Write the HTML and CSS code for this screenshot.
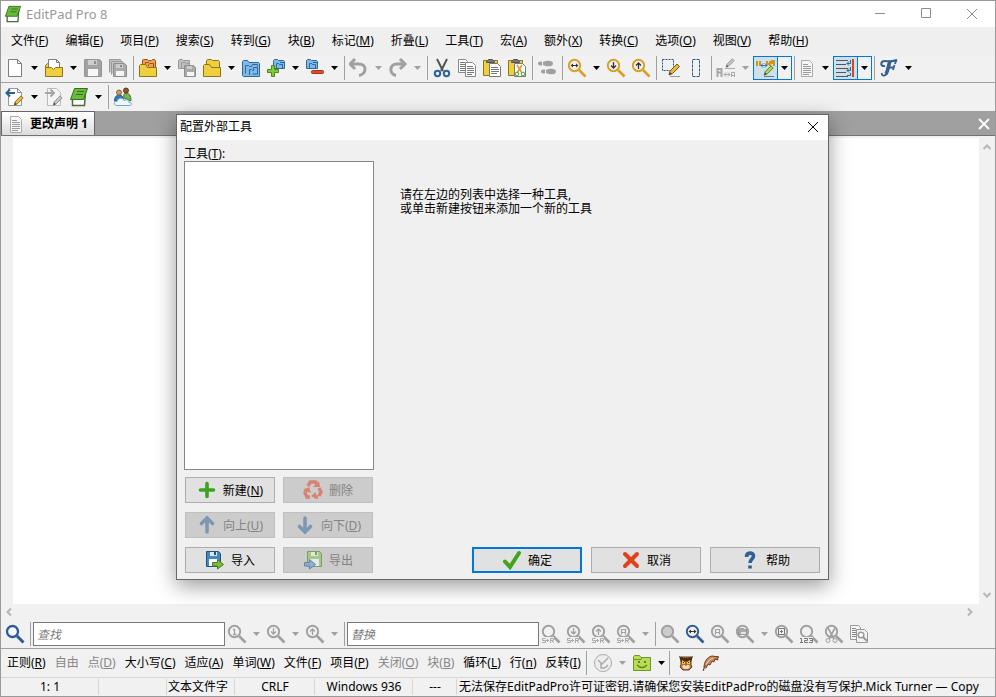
FILE: index.html
```html
<!DOCTYPE html>
<html lang="zh-CN">
<head>
<meta charset="utf-8">
<title>EditPad Pro 8</title>
<link rel="stylesheet" href="styles.css">
</head>
<body>
<svg class="sprite" aria-hidden="true">
  <symbol id="arrow" viewBox="0 0 8 4"><path d="M0 0h7L3.5 4z" fill="currentColor"/></symbol>
  <symbol id="page" viewBox="0 0 20 20"><path d="M3.5 1.5h9l4 4v13h-13z" fill="#fff" stroke="#7c7c7c"/><path d="M12.5 1.5v4h4" fill="none" stroke="#7c7c7c"/></symbol>
  <symbol id="open" viewBox="0 0 20 20"><path d="M1.5 10V7.500l2-2h3v4z" fill="#f0cf3c" stroke="#8a7526"/><path d="M4.500 12v-10.500h8l3 3v8z" fill="#fff" stroke="#7c7c7c"/><path d="M12.500 1.500v3h3" fill="none" stroke="#7c7c7c"/><path d="M1.500 18.500v-9h6l2 2 2-2h7v9z" fill="#f0cf3c" stroke="#8a7526"/></symbol>
  <symbol id="save" viewBox="0 0 20 20"><path d="M1.500 1.500h15l2 2v15h-17z" fill="#a3a3a3" stroke="#949494"/><path d="M5 2h9v5H5z" fill="#cfcfcf"/><path d="M11 3h2v3h-2z" fill="#8d8d8d"/><path d="M5 11h10v7H5z" fill="#f8f8f8"/></symbol>
  <symbol id="saveall" viewBox="0 0 20 20"><path d="M1.500 14.500v-13h11l1 1M3.500 16.500v-13h11l1 1" fill="#c5c5c5" stroke="#999"/><path d="M5.500 5.500h11l2 2v11h-13z" fill="#aaa" stroke="#8d8d8d"/><path d="M8 6h7v4H8z" fill="#ccc"/><path d="M12 7h2v2h-2z" fill="#888"/><path d="M8 13h8v5H8z" fill="#f5f5f5"/></symbol>
  <symbol id="project" viewBox="0 0 20 20"><path d="M4.500 10v-8l1-.5h4l1 1h3l1-1h2l1 1.500v7" fill="#f2a14b" stroke="#94551c"/><path d="M7.500 9V4.500h3l1 1h4V9M10.500 8V6.500" fill="none" stroke="#94551c"/><path d="M1.500 18.500v-11l1-1h5l2 3h9v9z" fill="#f0cf3c" stroke="#8a7526"/></symbol>
  <symbol id="projsave" viewBox="0 0 20 20"><path d="M1.500 10.500v-8l1-1h3l1 1h6v8z" fill="#c0c0c0" stroke="#999"/><path d="M4.500 10V4.500h4l1 1h3" fill="none" stroke="#999"/><path d="M7.500 7.500h9l2 2v9h-11z" fill="#aaa" stroke="#8d8d8d"/><path d="M10 8h5v3h-5z" fill="#ccc"/><path d="M10 14h7v4h-7z" fill="#f5f5f5"/></symbol>
  <symbol id="folders" viewBox="0 0 20 20"><path d="M4.500 9V3l1-1.500h4l1 1h6l1 1V11" fill="#f0cf3c" stroke="#8a7526"/><path d="M1.500 18.500v-11l1-1h5l2 3h9v9z" fill="#f0cf3c" stroke="#8a7526"/></symbol>
  <symbol id="bluefolders" viewBox="0 0 20 20"><path d="M1.500 17.500V3.500l1-1h4l1.500 2h9.500l1 1v13h-16z" fill="#7fb9ea" stroke="#2f6899"/><path d="M4.500 15.500v-8h3l1 1h2l1-2h5v2M8.500 17V11.500h2l1 1h1V9.500h4V16h-5" fill="none" stroke="#2f6899"/></symbol>
  <symbol id="bluesmall" viewBox="0 0 12 10"><path d="M.5 9.500v-8l1-1h3l1 1h5l1 1v7z" fill="#7fb9ea" stroke="#2f6899"/><path d="M3.500 9V4.500h2l1 1h3V9M7 3.500h4" fill="none" stroke="#2f6899"/></symbol>
  <symbol id="projadd" viewBox="0 0 20 20"><use href="#bluesmall" x="7" y="1" width="12" height="10"/><path d="M5.500 7.500h3v4h4v3h-4v4h-3v-4h-4v-3h4z" fill="#7ecb35" stroke="#4b8b1e"/></symbol>
  <symbol id="projdel" viewBox="0 0 20 20"><use href="#bluesmall" x="1" y="1" width="12" height="10"/><rect x="6.500" y="12.500" width="12" height="3" rx="1" fill="#e34b25" stroke="#a43318"/></symbol>
  <symbol id="undo" viewBox="0 0 20 20"><path d="M6 1L1 6l5 5M2 6h8c8 0 8 10 0 11.500" fill="none" stroke="#a0a0a0" stroke-width="3"/></symbol>
  <symbol id="redo" viewBox="0 0 20 20"><path d="M12 1l5 5-5 5M16 6H9C1 6 1 16 8 17.500" fill="none" stroke="#a0a0a0" stroke-width="3"/></symbol>
  <symbol id="cut" viewBox="0 0 20 20"><path d="M5 1l6 12M15 1L9 13" fill="none" stroke="#555" stroke-width="2"/><circle cx="5.500" cy="15.500" r="2.700" fill="none" stroke="#2c6199" stroke-width="2"/><circle cx="14.500" cy="15.500" r="2.700" fill="none" stroke="#2c6199" stroke-width="2"/></symbol>
  <symbol id="copy" viewBox="0 0 20 20"><path d="M1.500 1.500h7l2 2v11h-9z" fill="#fff" stroke="#888"/><path d="M3 4.500h5M3 6.500h5M3 8.500h5M3 10.500h5M3 12.500h5" stroke="#777"/><path d="M8.500 4.500h7l3 3v11h-10z" fill="#fff" stroke="#888"/><path d="M10 8.500h6M10 10.500h7M10 12.500h7M10 14.500h7M10 16.500h5" stroke="#777"/></symbol>
  <symbol id="clipboard" viewBox="0 0 20 20"><path d="M1.500 2.500h14v15h-14z" fill="#f0cf3c" stroke="#8a7526"/><path d="M4.500 3.500l2-2h4l2 2v1h-8z" fill="#777" stroke="#555"/></symbol>
  <symbol id="paste" viewBox="0 0 20 20"><use href="#clipboard"/><path d="M7.500 5.500h8l3 3v10h-11z" fill="#fff" stroke="#777"/><path d="M9 9.500h7M9 11.500h8M9 13.500h8M9 15.500h6" stroke="#777"/></symbol>
  <symbol id="pastecut" viewBox="0 0 20 20"><use href="#clipboard"/><path d="M7.500 5.500h8l3 3v10h-11z" fill="#fff" stroke="#777"/><path d="M10 7l5 8M15 7l-5 8" stroke="#d99a2b" stroke-width="1.500"/><circle cx="10" cy="16" r="1.800" fill="none" stroke="#46a637"/><circle cx="16" cy="16" r="1.800" fill="none" stroke="#46a637"/></symbol>
  <symbol id="compare" viewBox="0 0 20 20"><path d="M1 5.500C1 3.500 3 3.500 5 3.500v4C3 7.500 1 7.500 1 5.500zM6 4c4-2 10-2 10 1.500S10 9 6 7zM4 13.500c0-2 2-2 4-2v4c-2 0-4 0-4-2zM9 12c4-2 10-2 10 1.500S13 17 9 15z" fill="#a0a0a0"/></symbol>
  <symbol id="mag" viewBox="0 0 20 20"><circle cx="7.500" cy="7.500" r="5.700" fill="none" stroke="currentColor" stroke-width="1.900"/><path d="M12 12l6.500 6.500" stroke="currentColor" stroke-width="2.600"/></symbol>
  <symbol id="magbig" viewBox="0 0 20 20"><circle cx="7.500" cy="7.500" r="5.500" fill="#f7fafc" stroke="currentColor" stroke-width="2.300"/><path d="M12 12l6.500 6.500" stroke="currentColor" stroke-width="3"/></symbol>
  <symbol id="magh" viewBox="0 0 20 20"><use href="#mag"/><path d="M4 7.500h7" stroke="#333"/><path d="M6 5.500v4L3.500 7.500zM9 5.500v4l2.500-2z" fill="#333"/></symbol>
  <symbol id="magdown" viewBox="0 0 20 20"><use href="#mag"/><path d="M7.500 4v6M5 7.500l2.500 2.500L10 7.500" fill="none" stroke="var(--mark,currentColor)" stroke-width="1.300"/></symbol>
  <symbol id="magup" viewBox="0 0 20 20"><use href="#mag"/><path d="M7.500 11V5M5 7.500L7.500 5 10 7.500" fill="none" stroke="var(--mark,currentColor)" stroke-width="1.300"/></symbol>
  <symbol id="magone" viewBox="0 0 20 20"><use href="#mag"/><path d="M6 5.500h1.500V10M6 10.500h3.500" fill="none" stroke="currentColor" stroke-width="1.300"/></symbol>
  <symbol id="maga" viewBox="0 0 20 20"><use href="#mag"/><path d="M5.500 10.500v-5h4v5M5.500 8.500h4" fill="none" stroke="currentColor" stroke-width="1.200"/></symbol>
  <symbol id="magfill" viewBox="0 0 20 20"><circle cx="7.500" cy="7.500" r="5.500" fill="#ccc"/><use href="#mag"/></symbol>
  <symbol id="magfolder" viewBox="0 0 20 20"><use href="#mag"/><path d="M3.500 10.500v-5l2-1h3l1 1h2v5z" fill="#aaa" stroke="#999"/><path d="M6 8h5v2H6z" fill="#e6e6e6"/></symbol>
  <symbol id="magplus" viewBox="0 0 20 20"><use href="#mag"/><path d="M4.500 4.500h6v6h-6zM7.500 6v3M6 7.500h3" fill="none" stroke="#777"/></symbol>
  <symbol id="magcut" viewBox="0 0 20 20"><use href="#mag"/><path d="M4 4l6 11M11 4L5 15" stroke="currentColor" stroke-width="1.600"/><circle cx="4" cy="16.500" r="2" fill="#eee" stroke="currentColor"/><circle cx="11" cy="16.500" r="2" fill="#eee" stroke="currentColor"/></symbol>
  <symbol id="sr" viewBox="0 0 20 20"><path d="M0 13h13v6H0z" fill="#f0f0f0"/><path d="M4.500 14.500h-3v2h3v2H1M5 16.500h3M6.500 15v3M9.500 19v-4.500h3v2h-3M11 17l2 2" fill="none" stroke="#aaa"/></symbol>
  <symbol id="magcount" viewBox="0 0 20 20"><use href="#mag"/><path d="M1 13h13v7H1z" fill="#f0f0f0"/><path d="M1 14.500h1.500V19M1 18.500h3M5 14.500h3.500v2h-3v2H9M10 14.500h3.500v4H10M11 16.500h2" fill="none" stroke="#777"/></symbol>
  <symbol id="magsheet" viewBox="0 0 20 20"><path d="M1.500 1.500h8l2 2v12h-10z" fill="#f4f4f4" stroke="#999"/><path d="M3 4.500h4M3 6.500h4M3 8.500h4M3 10.500h4M3 12.500h4" stroke="#888"/><path d="M7.500 5.500h8l3 3v10h-11z" fill="#f4f4f4" stroke="#999"/><circle cx="12" cy="11" r="2.800" fill="#fff" stroke="#999" stroke-width="1.500"/><path d="M14 13l4 4" stroke="#999" stroke-width="2"/></symbol>
  <symbol id="pencil" viewBox="0 0 12 13"><path d="M1 12l1-4L9 1l2.500 2.500L4.500 10.500z" fill="var(--pen,#f0bd31)" stroke="var(--penedge,#77551e)"/><path d="M1 12l1-3 2 2z" fill="#444"/></symbol>
  <symbol id="selectpen" viewBox="0 0 20 20"><path d="M1.500 1.500h11v11h-11z" fill="none" stroke="#23558e" stroke-dasharray="2 1"/><use href="#pencil" x="7" y="5" width="12" height="13"/><path d="M9 18.500h10" stroke="#999"/></symbol>
  <symbol id="rectsel" viewBox="0 0 20 20"><path d="M6.500 1.500h7v17h-7z" fill="none" stroke="#23558e" stroke-dasharray="3 1"/></symbol>
  <symbol id="replacegray" viewBox="0 0 20 20"><g class="graypen"><use href="#pencil" x="9" y="0" width="10" height="10"/></g><path d="M9 10.500h10" stroke="#aaa"/><path d="M1.500 19v-8h4v8M1.500 14.500h4" fill="none" stroke="#a7a7a7" stroke-width="2"/><path d="M8 16.500h6M10 14.500l-2 2 2 2M12 14.500l2 2-2 2M15.500 19v-4.500h3V19M16 17.500h2" fill="none" stroke="#a7a7a7"/></symbol>
  <symbol id="highlight" viewBox="0 0 20 20"><path d="M2 3v5M5 3v5M12 3v3h3V3M15 3v5M17 6V3h2v5" fill="none" stroke="#d3971c" stroke-width="2"/><path d="M6 7.500h6M8 5.500l-2 2 2 2M10 5.500l2 2-2 2" fill="none" stroke="#3b709f"/><g class="greenpen"><use href="#pencil" x="8" y="7" width="11" height="11"/></g><path d="M9 18.500h10" stroke="#777"/></symbol>
  <symbol id="textpage" viewBox="0 0 20 20"><path d="M4.500 2.500h8l3 3v13h-11z" fill="#f7f7f7" stroke="#aaa"/><path d="M6 6.500h5M6 8.500h8M6 10.500h8M6 12.500h8M6 14.500h8M6 16.500h6" stroke="#999"/></symbol>
  <symbol id="wrap" viewBox="0 0 20 20"><path d="M1 2.500h12M1 6.500h10M1 10.500h12M1 14.500h10M1 18.500h12" stroke="#555"/><path d="M15.500 2v3.500H12l2-2m-2 2l2 2M15.500 9v3.500H12l2-2m-2 2l2 2M15.500 15v2.500H12" fill="none" stroke="#27649b"/><path d="M18 1v18" stroke="#e0411e" stroke-width="2"/></symbol>
  <symbol id="scriptf" viewBox="0 0 20 20"><path d="M6 8C1 9 1 3 6 3c4 0 7 1 12-1" fill="none" stroke="#355f91" stroke-width="2"/><path d="M11 3C9 9 9 13 7 16" fill="none" stroke="#355f91" stroke-width="3.600"/><path d="M8 15c-2 4-6 3-5 0M9 9.500h5.500M15.500 7l-1.500 5M17.500 1.500L16 6" fill="none" stroke="#355f91" stroke-width="1.800"/></symbol>
  <symbol id="editback" viewBox="0 0 20 20"><path d="M3.500 1.500h9l4 4v13h-13z" fill="#fff" stroke="#999"/><path d="M12.500 1.500v4h4" fill="none" stroke="#888"/><path d="M10 6H2.500M5 2.500L1.500 6 5 9.500" fill="none" stroke="#2a5f96" stroke-width="2"/><use href="#pencil" x="8" y="8" width="11" height="11"/></symbol>
  <symbol id="editfwd" viewBox="0 0 20 20"><path d="M3.500 1.500h9l4 4v13h-13z" fill="#f5f5f5" stroke="#bbb"/><path d="M1 6h8M6.500 2.500L10 6 6.500 9.500" fill="none" stroke="#a5a5a5" stroke-width="2"/><g class="graypen"><use href="#pencil" x="8" y="8" width="11" height="11"/></g></symbol>
  <symbol id="book" viewBox="0 0 20 20"><path d="M3.500 12v6.500h12l1-14" fill="#fff" stroke="#4d6b3a" stroke-width="1.500"/><path d="M5.500 1.500h13l-4 11h-13z" fill="#6ab83e" stroke="#31741b"/><path d="M8 4.500h7M7 7.500h7" stroke="#31741b"/></symbol>
  <symbol id="people" viewBox="0 0 20 20"><path d="M11 11q-1-5 2-5 5 0 5 8z" fill="#75b749" stroke="#3e7c29"/><path d="M1.500 14q0-6 5-6 4 0 4 6z" fill="#3679b5" stroke="#255989"/><circle cx="6" cy="5.500" r="2.500" fill="#c99c6c" stroke="#8a613c"/><circle cx="13" cy="3.500" r="2.500" fill="#895735" stroke="#633719"/><path d="M4 18.500c-4 0-3-5 0-4 1-4 6-4 7-1 3-2 5 0 5 2 4 0 3 3 0 3z" fill="#eff8ff" stroke="#6aa8d8"/></symbol>
  <symbol id="clock" viewBox="0 0 20 20"><circle cx="10" cy="10" r="8.500" fill="#eee" stroke="#aaa"/><path d="M5 7l4 4 6-6M8 10v5h4M12 15l3-3" fill="none" stroke="#aaa" stroke-width="1.500"/></symbol>
  <symbol id="smile" viewBox="0 0 20 20"><path d="M1.500 17.500v-14l1-1h5l1.500 2h9.500v13z" fill="#b9dc58" stroke="#6e9724"/><path d="M2 6.500h7l1-2" fill="none" stroke="#6e9724"/><path d="M6 8h2v2H6zM12 8h2v2h-2z" fill="#5c851f"/><path d="M5 12q5 5 10 0" fill="none" stroke="#5c851f" stroke-width="1.500"/></symbol>
  <symbol id="owl" viewBox="0 0 20 20"><path d="M5 4h10v8l1 2-3 3H7l-3-3 1-2z" fill="#b8743e" stroke="#6b3e1c"/><path d="M3 3l5 2h4l5-2-2 6-3 1-2-2-2 2-3-1z" fill="#4e2c17"/><path d="M6 7l3 2v2H6zM14 7l-3 2v2h3z" fill="#f5c72b"/><path d="M7 9h1v1H7zM12 9h1v1h-1z" fill="#222"/><path d="M7 12h6l1 2-2 2H8l-2-2z" fill="#eed8bd"/><path d="M10 10v3" stroke="#9b4f1b"/></symbol>
  <symbol id="feather" viewBox="0 0 20 20"><path d="M3 15C3 9 6 4 11 3l7 1-2 1 1 2-3-1-1 3-2-1-2 4-2-1-2 4z" fill="#c98b62" stroke="#6b3a1d"/><path d="M3 18c1-6 4-11 9-13" fill="none" stroke="#f3d6bd"/><path d="M2 18c1-3 2-5 3-6" fill="none" stroke="#6b3a1d"/></symbol>
  <symbol id="plus" viewBox="0 0 20 20"><path d="M10 3.500v13M3.500 10h13" stroke="#3ea21d" stroke-width="3.600" stroke-linecap="round"/></symbol>
  <symbol id="recycle" viewBox="0 0 20 20"><path d="M5 6l2.500-4h5L14 5M16 8l2 4-2 4M15 17h-3M7 17H4l-2-4 2-4" fill="none" stroke="#d98173" stroke-width="3.400"/><path d="M10 7h7l-1-6zM13 12v7l-5-3zM0 10l6-3 2 6z" fill="#d98173"/></symbol>
  <symbol id="up" viewBox="0 0 20 20"><path d="M10 17V4M4.500 8.500L10 3l5.500 5.500" fill="none" stroke="#7e98b4" stroke-width="3.600" stroke-linecap="round"/></symbol>
  <symbol id="down" viewBox="0 0 20 20"><path d="M10 3v13M4.500 11.500L10 17l5.500-5.500" fill="none" stroke="#7e98b4" stroke-width="3.600" stroke-linecap="round"/></symbol>
  <symbol id="import" viewBox="0 0 20 20"><path d="M1.500 1.500h12l2 2v13h-14z" fill="#4289c4" stroke="#24527c"/><path d="M5 2h7v4H5z" fill="#d9e8f3"/><path d="M9 2h2v3H9z" fill="#24527c"/><path d="M4 9h9v7H4z" fill="#fff"/><path d="M7.500 12.500h5v-3l6 5-6 4.500v-3h-5z" fill="#7dbc38" stroke="#46801b"/></symbol>
  <symbol id="export" viewBox="0 0 20 20"><path d="M4.500 1.500h12l2 2v13h-14z" fill="#a6c987" stroke="#809b6a"/><path d="M8 2h7v4H8z" fill="#dfe8d7"/><path d="M12 2h2v3h-2z" fill="#809b6a"/><path d="M7 9h9v7H7z" fill="#e7e7e7"/><path d="M1.500 12.500h5v-3l6 5-6 4.500v-3h-5z" fill="#8aaed0" stroke="#6587a7"/></symbol>
  <symbol id="check" viewBox="0 0 20 20"><path d="M3 11.500L8 17 17 3" fill="none" stroke="#3fa51d" stroke-width="4" stroke-linecap="round"/></symbol>
  <symbol id="cross" viewBox="0 0 20 20"><path d="M4 4l12 12M16 4L4 16" stroke="#e2401d" stroke-width="4" stroke-linecap="round"/></symbol>
  <symbol id="question" viewBox="0 0 20 20"><path d="M6.500 7c0-5 7-5 7-1 0 3-3.500 3-3.500 7M10 15.500v3" fill="none" stroke="#2e5f95" stroke-width="3.600"/></symbol>
  <symbol id="close" viewBox="0 0 12 12"><path d="M1 1l10 10M11 1L1 11" fill="none" stroke="currentColor" stroke-width="var(--weight,1)"/></symbol>
</svg>

<div class="window">
  <header class="titlebar">
    <svg class="icon"><use href="#book"/></svg>
    <h1>EditPad Pro 8</h1>
    <div class="controls">
      <button aria-label="最小化"><svg viewBox="0 0 12 12"><path d="M1 5.500h10" stroke="currentColor"/></svg></button>
      <button aria-label="最大化"><svg viewBox="0 0 12 12"><path d="M1.500 .5h9v9h-9z" fill="none" stroke="currentColor"/></svg></button>
      <button aria-label="关闭"><svg><use href="#close"/></svg></button>
    </div>
  </header>

  <nav class="menubar">
    <button>文件(<u>F</u>)</button><button>编辑(<u>E</u>)</button><button>项目(<u>P</u>)</button><button>搜索(<u>S</u>)</button><button>转到(<u>G</u>)</button><button>块(<u>B</u>)</button><button>标记(<u>M</u>)</button><button>折叠(<u>L</u>)</button><button>工具(<u>T</u>)</button><button>宏(<u>A</u>)</button><button>额外(<u>X</u>)</button><button>转换(<u>C</u>)</button><button>选项(<u>O</u>)</button><button>视图(<u>V</u>)</button><button>帮助(<u>H</u>)</button>
  </nav>

  <div class="toolbar ruled" role="toolbar">
    <button class="tool" aria-label="新建"><svg><use href="#page"/></svg></button><button class="drop" aria-label="更多"><svg><use href="#arrow"/></svg></button>
    <button class="tool" aria-label="打开"><svg><use href="#open"/></svg></button><button class="drop" aria-label="更多"><svg><use href="#arrow"/></svg></button>
    <button class="tool" aria-label="保存" disabled><svg><use href="#save"/></svg></button>
    <button class="tool" aria-label="全部保存" disabled><svg><use href="#saveall"/></svg></button>
    <span class="sep"></span>
    <button class="tool" aria-label="打开项目"><svg><use href="#project"/></svg></button><button class="drop" aria-label="更多"><svg><use href="#arrow"/></svg></button>
    <button class="tool" aria-label="保存项目" disabled><svg><use href="#projsave"/></svg></button>
    <button class="tool" aria-label="打开文件夹"><svg><use href="#folders"/></svg></button><button class="drop" aria-label="更多"><svg><use href="#arrow"/></svg></button>
    <button class="tool" aria-label="管理项目"><svg><use href="#bluefolders"/></svg></button>
    <button class="tool" aria-label="添加到项目"><svg><use href="#projadd"/></svg></button><button class="drop" aria-label="更多"><svg><use href="#arrow"/></svg></button>
    <button class="tool" aria-label="从项目移除"><svg><use href="#projdel"/></svg></button><button class="drop" aria-label="更多"><svg><use href="#arrow"/></svg></button>
    <span class="sep"></span>
    <button class="tool" aria-label="撤消" disabled><svg><use href="#undo"/></svg></button><button class="drop" aria-label="更多" disabled><svg><use href="#arrow"/></svg></button>
    <button class="tool" aria-label="重做" disabled><svg><use href="#redo"/></svg></button><button class="drop" aria-label="更多" disabled><svg><use href="#arrow"/></svg></button>
    <span class="sep"></span>
    <button class="tool" aria-label="剪切"><svg><use href="#cut"/></svg></button>
    <button class="tool" aria-label="复制"><svg><use href="#copy"/></svg></button>
    <button class="tool" aria-label="粘贴"><svg><use href="#paste"/></svg></button>
    <button class="tool" aria-label="交换剪贴板"><svg><use href="#pastecut"/></svg></button>
    <span class="sep"></span>
    <button class="tool" aria-label="比较" disabled><svg><use href="#compare"/></svg></button>
    <span class="sep"></span>
    <button class="tool gold" aria-label="查找"><svg><use href="#magh"/></svg></button><button class="drop" aria-label="更多"><svg><use href="#arrow"/></svg></button>
    <button class="tool gold" aria-label="查找下一个"><svg><use href="#magdown"/></svg></button>
    <button class="tool gold" aria-label="查找上一个"><svg><use href="#magup"/></svg></button>
    <span class="sep"></span>
    <button class="tool" aria-label="选择"><svg><use href="#selectpen"/></svg></button>
    <button class="tool" aria-label="矩形选择"><svg><use href="#rectsel"/></svg></button>
    <span class="sep"></span>
    <button class="tool" aria-label="替换字符" disabled><svg><use href="#replacegray"/></svg></button><button class="drop" aria-label="更多" disabled><svg><use href="#arrow"/></svg></button>
    <span class="toggle"><button class="tool" aria-label="突出显示" aria-pressed="true"><svg><use href="#highlight"/></svg></button><button class="drop" aria-label="更多"><svg><use href="#arrow"/></svg></button></span>
    <span class="sep"></span>
    <button class="tool slim" aria-label="文件类型"><svg><use href="#textpage"/></svg></button><button class="drop" aria-label="更多"><svg><use href="#arrow"/></svg></button>
    <span class="toggle"><button class="tool" aria-label="自动换行" aria-pressed="true"><svg><use href="#wrap"/></svg></button><button class="drop" aria-label="更多"><svg><use href="#arrow"/></svg></button></span>
    <span class="sep"></span>
    <button class="tool" aria-label="字体"><svg><use href="#scriptf"/></svg></button><button class="drop" aria-label="更多"><svg><use href="#arrow"/></svg></button>
  </div>

  <div class="toolbar" role="toolbar">
    <button class="tool" aria-label="上一编辑"><svg><use href="#editback"/></svg></button><button class="drop" aria-label="更多"><svg><use href="#arrow"/></svg></button>
    <button class="tool" aria-label="下一编辑" disabled><svg><use href="#editfwd"/></svg></button>
    <button class="tool" aria-label="书签"><svg><use href="#book"/></svg></button><button class="drop" aria-label="更多"><svg><use href="#arrow"/></svg></button>
    <span class="sep"></span>
    <button class="tool" aria-label="论坛"><svg><use href="#people"/></svg></button>
  </div>

  <div class="tabs">
    <button class="tab"><svg class="icon"><use href="#textpage"/></svg>更改声明 1</button>
    <button class="tabclose" aria-label="关闭标签"><svg><use href="#close"/></svg></button>
  </div>

  <main class="editor">
    <div class="gutter"></div>
    <div class="paper"></div>
    <div class="vscroll">
      <svg viewBox="0 0 10 10"><path d="M1.500 7L5 3.500 8.500 7"/></svg>
      <svg viewBox="0 0 10 10"><path d="M1.500 3L5 6.500 8.500 3"/></svg>
    </div>
  </main>
  <div class="hscroll">
    <svg viewBox="0 0 10 10"><path d="M7 1.500L3.500 5 7 8.500"/></svg>
    <svg viewBox="0 0 10 10"><path d="M3 1.500L6.500 5 3 8.500"/></svg>
  </div>

  <div class="toolbar ruled" role="toolbar">
    <button class="tool blue" aria-label="搜索"><svg><use href="#magbig"/></svg></button>
    <span class="sep"></span>
    <input type="text" placeholder="查找" aria-label="查找">
    <button class="tool" aria-label="查找第一个" disabled><svg><use href="#magone"/></svg></button><button class="drop" aria-label="更多" disabled><svg><use href="#arrow"/></svg></button>
    <button class="tool" aria-label="查找下一个" disabled><svg><use href="#magdown"/></svg></button><button class="drop" aria-label="更多" disabled><svg><use href="#arrow"/></svg></button>
    <button class="tool" aria-label="查找上一个" disabled><svg><use href="#magup"/></svg></button><button class="drop" aria-label="更多" disabled><svg><use href="#arrow"/></svg></button>
    <span class="sep"></span>
    <input type="text" placeholder="替换" aria-label="替换">
    <button class="tool" aria-label="替换当前" disabled><svg><use href="#mag"/><use href="#sr"/></svg></button>
    <button class="tool" aria-label="替换下一个" disabled><svg><use href="#magdown"/><use href="#sr"/></svg></button>
    <button class="tool" aria-label="替换上一个" disabled><svg><use href="#magup"/><use href="#sr"/></svg></button>
    <button class="tool" aria-label="全部替换" disabled><svg><use href="#maga"/><use href="#sr"/></svg></button><button class="drop" aria-label="更多" disabled><svg><use href="#arrow"/></svg></button>
    <span class="sep"></span>
    <button class="tool" aria-label="突出显示" disabled><svg><use href="#magfill"/></svg></button>
    <button class="tool blue" aria-label="增量搜索"><svg><use href="#magh"/></svg></button>
    <button class="tool" aria-label="查找全部" disabled><svg><use href="#maga"/></svg></button>
    <button class="tool" aria-label="文件夹搜索" disabled><svg><use href="#magfolder"/></svg></button><button class="drop" aria-label="更多" disabled><svg><use href="#arrow"/></svg></button>
    <button class="tool" aria-label="折叠行" disabled><svg><use href="#magplus"/></svg></button>
    <button class="tool" aria-label="计数" disabled><svg><use href="#magcount"/></svg></button>
    <button class="tool" aria-label="剪切匹配" disabled><svg><use href="#magcut"/></svg></button>
    <button class="tool" aria-label="复制匹配" disabled><svg><use href="#magsheet"/></svg></button>
  </div>

  <div class="toolbar options" role="toolbar">
    <button>正则(<u>R</u>)</button><button disabled>自由</button><button disabled>点(<u>D</u>)</button><button>大小写(<u>C</u>)</button><button>适应(<u>A</u>)</button><button>单词(<u>W</u>)</button><button>文件(<u>F</u>)</button><button>项目(<u>P</u>)</button><button disabled>关闭(<u>O</u>)</button><button disabled>块(<u>B</u>)</button><button>循环(<u>L</u>)</button><button>行(<u>n</u>)</button><button>反转(<u>I</u>)</button>
    <span class="sep"></span>
    <button class="tool" aria-label="历史" disabled><svg><use href="#clock"/></svg></button><button class="drop" aria-label="更多" disabled><svg><use href="#arrow"/></svg></button>
    <button class="tool" aria-label="收藏"><svg><use href="#smile"/></svg></button><button class="drop" aria-label="更多"><svg><use href="#arrow"/></svg></button>
    <span class="sep"></span>
    <button class="tool" aria-label="RegexBuddy"><svg><use href="#owl"/></svg></button>
    <button class="tool" aria-label="PowerGREP"><svg><use href="#feather"/></svg></button>
  </div>

  <footer class="status">
    <span class="position">1: 1</span><span></span><span>文本文件字</span><span class="eol">CRLF</span><span class="encoding">Windows 936</span><span class="mode">---</span>
    <span class="message">无法保存EditPadPro许可证密钥.请确保您安装EditPadPro的磁盘没有写保护.Mick Turner — Copy</span>
  </footer>
</div>

<section class="dialog" role="dialog" aria-labelledby="dialog-title">
  <header>
    <h2 id="dialog-title">配置外部工具</h2>
    <button aria-label="关闭"><svg><use href="#close"/></svg></button>
  </header>
  <div class="dialog-body">
    <div class="list">
      <label for="tools">工具(<u>T</u>):</label>
      <select id="tools" size="12"></select>
      <div class="actions">
        <button><svg class="icon"><use href="#plus"/></svg><span>新建(<u>N</u>)</span></button>
        <button disabled><svg class="icon"><use href="#recycle"/></svg><span>删除</span></button>
        <button disabled><svg class="icon"><use href="#up"/></svg><span>向上(<u>U</u>)</span></button>
        <button disabled><svg class="icon"><use href="#down"/></svg><span>向下(<u>D</u>)</span></button>
        <button><svg class="icon"><use href="#import"/></svg><span>导入</span></button>
        <button disabled><svg class="icon"><use href="#export"/></svg><span>导出</span></button>
      </div>
    </div>
    <div class="detail">
      <p>请在左边的列表中选择一种工具,<br>或单击新建按钮来添加一个新的工具</p>
      <div class="answers">
        <button class="default"><svg class="icon"><use href="#check"/></svg><span>确定</span></button>
        <button><svg class="icon"><use href="#cross"/></svg><span>取消</span></button>
        <button><svg class="icon"><use href="#question"/></svg><span>帮助</span></button>
      </div>
    </div>
  </div>
</section>
</body>
</html>
```
FILE: styles.css
```css
* { box-sizing: border-box; }
body, button, input, select {
  font: 12px/16px "Noto Sans", "Noto Sans CJK SC", sans-serif;
  color: #000;
}
body { margin: 0; background: #f0f0f0; }
button { margin: 0; padding: 0; border: 0; background: none; white-space: nowrap; }
button:disabled { color: #868686; }
h1, h2, p { margin: 0; font-size: 12px; font-weight: normal; }
svg { display: block; flex: none; }
.sprite { position: absolute; width: 0; height: 0; }
.icon { width: 20px; height: 20px; }
.graypen { --pen: #c2c2c2; --penedge: #909090; }
.greenpen { --pen: #a8d947; --penedge: #4f6d2b; }

.window {
  display: flex;
  flex-direction: column;
  height: 100vh;
  border: 1px solid #999;
  background: #f1f1f1;
  overflow: hidden;
}

.titlebar {
  display: flex;
  align-items: center;
  flex: none;
  height: 26px;
  padding-left: 3px;
  background: #fff;
}
.titlebar .icon { width: 18px; height: 18px; }
.titlebar h1 { margin-left: 4px; color: #999; font-size: 13px; }
.controls { display: flex; margin-left: auto; color: #8c8c8c; }
.controls button { width: 46px; padding: 6px 17px; color: inherit; }
.controls svg { width: 12px; height: 12px; }

.menubar { display: flex; flex: none; align-items: center; gap: 17px; height: 28px; padding-left: 10px; background: #efefef; }

.toolbar { display: flex; flex: none; align-items: center; height: 28px; padding-left: 2px; }
.ruled { padding-bottom: 1px; border-bottom: 1px solid #a0a0a0; }
.tool { flex: none; width: 25px; padding: 0 3px 0 2px; }
.tool svg { width: 20px; height: 20px; }
.tool:disabled { color: #a0a0a0; }
.slim { width: 22px; padding: 0 2px 0 0; }
.gold { color: #d8a023; --mark: #333; }
.blue { color: #2d5d93; }
.drop { flex: none; width: 14px; padding: 10px 3px; }
.drop svg { width: 8px; height: 4px; }
.drop:disabled { color: #a0a0a0; }
.sep { flex: none; width: 5px; height: 24px; border-left: 1px solid #a0a0a0; margin-left: 2px; margin-right: -2px; }
.toggle { display: flex; flex: none; width: 39px; height: 24px; align-items: center; border: 1px solid #0078d7; }
.toggle .tool { width: 24px; height: 22px; padding: 0 2px 0 1px; background: #cfdfec; border-right: 1px solid #0078d7; }
.toggle .drop { width: 13px; }
.toolbar input {
  width: 192px;
  height: 24px;
  padding: 0 3px;
  border: 1px solid #7a7a7a;
  border-radius: 0;
  background: #fff;
}
.toolbar input::placeholder { color: #7c7c7c; font-style: italic; opacity: 1; }

.tabs { display: flex; flex: none; justify-content: space-between; height: 25px; background: #a0a0a0; border-bottom: 1px solid #737373; }
.tab {
  display: flex;
  align-items: center;
  gap: 4px;
  padding: 0 6px 0 4px;
  border: 1px solid #666;
  border-width: 1px 1px 0;
  background: linear-gradient(#fff, #dcdcdc);
  font-weight: bold;
}
.tabclose { padding: 7px 5px 5px; color: #fff; --weight: 1.8; }
.tabclose svg { width: 12px; height: 12px; }

.editor { display: flex; flex: 1; min-height: 0; }
.gutter { width: 12px; }
.paper { flex: 1; margin-top: 2px; background: #fff; }
.vscroll { display: flex; flex-direction: column; justify-content: space-between; width: 16px; padding: 6px 3px 4px; }
.hscroll { display: flex; flex: none; justify-content: space-between; height: 17px; padding: 3px 20px 4px 3px; }
.vscroll svg, .hscroll svg { width: 10px; height: 10px; fill: none; stroke: #b5b5b5; stroke-width: 2; }

.options > button:not(.tool, .drop) { margin-left: 4px; margin-right: 5px; }
.options .sep { margin-left: 0; margin-right: 0; }

.status { display: flex; flex: none; align-items: center; height: 19px; border-top: 1px solid #d6d6d6; }
.status span { flex: none; width: 68px; height: 16px; padding-left: 1px; border-right: 1px solid #d6d6d6; white-space: nowrap; overflow: hidden; }
.status .position { width: 98px; text-align: center; }
.status .eol, .status .encoding, .status .mode { text-align: center; }
.status .eol { width: 80px; }
.status .encoding { width: 98px; }
.status .mode { width: 44px; }
.status .message { flex: 1; width: auto; min-width: 0; padding-left: 2px; border: 0; }

.dialog {
  position: absolute;
  left: 176px;
  top: 114px;
  display: flex;
  flex-direction: column;
  width: 653px;
  border: 1px solid #666;
  background: #f0f0f0;
  box-shadow: 0 6px 20px rgba(0, 0, 0, .4);
}
.dialog header { display: flex; align-items: center; justify-content: space-between; height: 25px; padding: 0 9px 1px 3px; background: #fff; }
.dialog header svg { width: 12px; height: 12px; }
.dialog-body { display: flex; padding: 6px 8px 6px 7px; }
.list { display: flex; flex-direction: column; width: 190px; }
.list label { height: 15px; }
.list select { height: 309px; border: 1px solid #828790; border-radius: 0; background: #fff; padding: 0; outline: 0; }
.actions { display: grid; grid-template-columns: 90px 90px; gap: 9px 8px; margin: 7px 0 0 1px; }
.actions button, .answers button {
  display: flex;
  align-items: center;
  justify-content: center;
  gap: 6px;
  height: 26px;
  border: 1px solid #adadad;
  background: #e1e1e1;
}
.actions span, .answers span { padding-top: 2px; }
.actions button:disabled { border-color: #bfbfbf; background: #ccc; color: #838383; }
.detail { display: flex; flex: 1; flex-direction: column; justify-content: space-between; padding-left: 26px; }
.detail p { padding-top: 42px; line-height: 14px; }
.answers { display: flex; justify-content: flex-end; gap: 9px; }
.answers button { width: 110px; }
.answers .default { border: 2px solid #0078d7; }
```
